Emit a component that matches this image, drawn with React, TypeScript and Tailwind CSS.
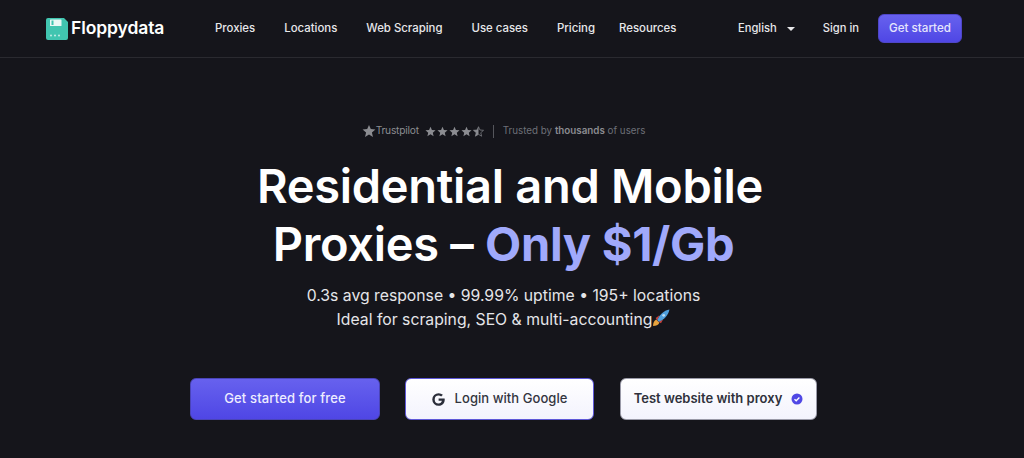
const navItems = ['Proxies', 'Locations', 'Web Scraping', 'Use cases', 'Pricing'];

function Star({ half = false, size = 11 }: { half?: boolean; size?: number }) {
  const d = 'M12 1.5l3.1 7.2 7.9.7-6 5.2 1.8 7.7L12 18.2l-6.8 4.1L7 14.6 1 9.4l7.9-.7z';
  return (
    <svg width={size} height={size} viewBox="0 0 24 24" fill="#8b8c91">
      {half ? (
        <>
          <path d="M12 1.5v16.7l-6.8 4.1L7 14.6 1 9.4l7.9-.7z" />
          <path d={d} fill="none" stroke="#8b8c91" strokeWidth="1.5" />
        </>
      ) : (
        <path d={d} />
      )}
    </svg>
  );
}

function FloppyLogo() {
  return (
    <svg width="22" height="22" viewBox="0 0 22 22">
      <path d="M2 0h16l4 4v16a2 2 0 0 1-2 2H2a2 2 0 0 1-2-2V2a2 2 0 0 1 2-2z" fill="#41c5b0" />
      <rect x="4" y="1.5" width="11.5" height="6.5" rx="0.5" fill="#e9f8f5" />
      <rect x="5.5" y="2.5" width="2" height="4.5" fill="#41c5b0" />
      <circle cx="5" cy="17.5" r="0.9" fill="#d3f2ec" />
      <circle cx="9" cy="17.5" r="0.9" fill="#d3f2ec" />
      <circle cx="13" cy="17.5" r="0.9" fill="#d3f2ec" />
    </svg>
  );
}

function GoogleG() {
  return (
    <svg width="13" height="13" viewBox="0 0 24 24" fill="#2b2e3a">
      <path d="M12.2 10v4.3h6.1c-.6 3-3 4.9-6.1 4.9a7.2 7.2 0 0 1 0-14.4c1.8 0 3.4.6 4.7 1.8l3.2-3.2A11.6 11.6 0 0 0 12.2.3a11.7 11.7 0 1 0 0 23.4c6.3 0 11.3-4.4 11.3-11.7 0-.7-.1-1.4-.2-2z" />
    </svg>
  );
}

function Rocket() {
  return (
    <svg width="18" height="18" viewBox="0 0 17 17" className="inline-block align-[-2px]">
      <path d="M1 16c0-3 1-5 3-6l3 3c-1 2-3 3-6 3z" fill="#e8a33d" />
      <path d="M3.5 8.5L7 6 5 11z" fill="#c8413b" />
      <path d="M8.5 13.5l2-3.500L6 12z" fill="#c8413b" />
      <path d="M5 10.5C7 5.500 11 1.500 16.500.5c-1 5.500-5 9.500-10 11.500z" fill="#4f9fdc" />
      <circle cx="11" cy="6" r="1.3" fill="#b8dcf5" />
    </svg>
  );
}

export default function App() {
  return (
    <div className="h-[458px] w-[1024px] overflow-hidden bg-[#15151b] font-['Inter',sans-serif] text-white">
      {/* Header */}
      <header className="flex h-[58px] items-center border-b border-[#2a2a30] pl-[46px] pr-[62px]">
        <div className="flex w-[169px] items-center gap-[3px]">
          <FloppyLogo />
          <span className="text-[17.5px] font-semibold tracking-[-0.1px]">Floppydata</span>
        </div>
        <nav className="flex items-center gap-[29px] text-[11.4px] font-medium text-[#e7e7ea]">
          {navItems.map((item) => (
            <a key={item}>{item}</a>
          ))}
          <a className="-ml-[5px]">Resources</a>
        </nav>
        <div className="ml-auto flex items-center text-[11.2px] font-medium text-[#e7e7ea]">
          <span>English</span>
          <span className="ml-[10px] mr-[28px] h-0 w-0 border-x-[4px] border-t-[4px] border-x-transparent border-t-[#e7e7ea]" />
          <span className="mr-[19px]">Sign in</span>
          <button className="h-[29px] w-[84px] rounded-md border border-[#4f46c8] bg-gradient-to-b from-[#6761ee] to-[#4f46e5] text-[11.6px] font-medium text-[#e6e5fc]">
            Get started
          </button>
        </div>
      </header>

      {/* Hero */}
      <main className="flex flex-col items-center pr-[17px] pt-[64px]">
        <div className="flex h-[18px] items-center text-[9.8px] text-[#6d7078]">
          <span className="flex items-center text-[#8b8c91]">
            <Star size={14} />
            <span className="text-[10.2px] tracking-[-0.2px]">Trustpilot</span>
          </span>
          <span className="ml-[6px] flex gap-[1px]">
            <Star />
            <Star />
            <Star />
            <Star />
            <Star half />
          </span>
          <span className="mx-[9px] h-[13px] w-px bg-[#55565c]" />
          <span>
            Trusted by <b className="font-semibold text-[#8b8c91]">thousands</b> of users
          </span>
        </div>

        <h1 className="mt-[17px] text-center text-[47px] font-semibold leading-[58px] tracking-[-0.3px]">
          <span className="pl-[13px]">Residential and Mobile</span>
          <br />
          Proxies – <span className="font-bold text-[#a0a9fb]">Only $1/Gb</span>
        </h1>

        <p className="mt-[11px] text-center text-[15.75px] leading-[24px] text-[#e5e5e9]">
          0.3s avg response • 99.99% uptime • 195+ locations
          <br />
          Ideal for scraping, SEO &amp; multi-accounting
          <Rocket />
        </p>

        <div className="mt-[46px] flex items-center gap-[25px]">
          <button className="h-[42px] w-[190px] rounded-md border border-[#4a44b8] bg-gradient-to-b from-[#6761ee] to-[#4f46e5] text-[13px] font-medium tracking-[0.15px] text-[#eeedff]">
            Get started for free
          </button>
          <button className="flex h-[42px] w-[189px] items-center justify-center gap-[10px] rounded-md border border-[#5e58d8] bg-gradient-to-b from-white to-[#f3f3fd] text-[13px] font-medium tracking-[0.05px] text-[#33353f]">
            <GoogleG />
            Login with Google
          </button>
          <button className="ml-[1px] flex h-[42px] w-[197px] items-center justify-center gap-[9px] rounded-md border border-[#9a9aa8] bg-gradient-to-b from-white to-[#f3f3fd] text-[13px] font-semibold text-[#2f313b]">
            Test website with proxy
            <svg width="12" height="12" viewBox="0 0 12 12">
              <circle cx="6" cy="6" r="5.5" fill="#5048e5" />
              <path d="M3.5 6.2l1.7 1.6 3.2-3.3" fill="none" stroke="#fff" strokeWidth="1.3" />
            </svg>
          </button>
        </div>
      </main>
    </div>
  );
}
